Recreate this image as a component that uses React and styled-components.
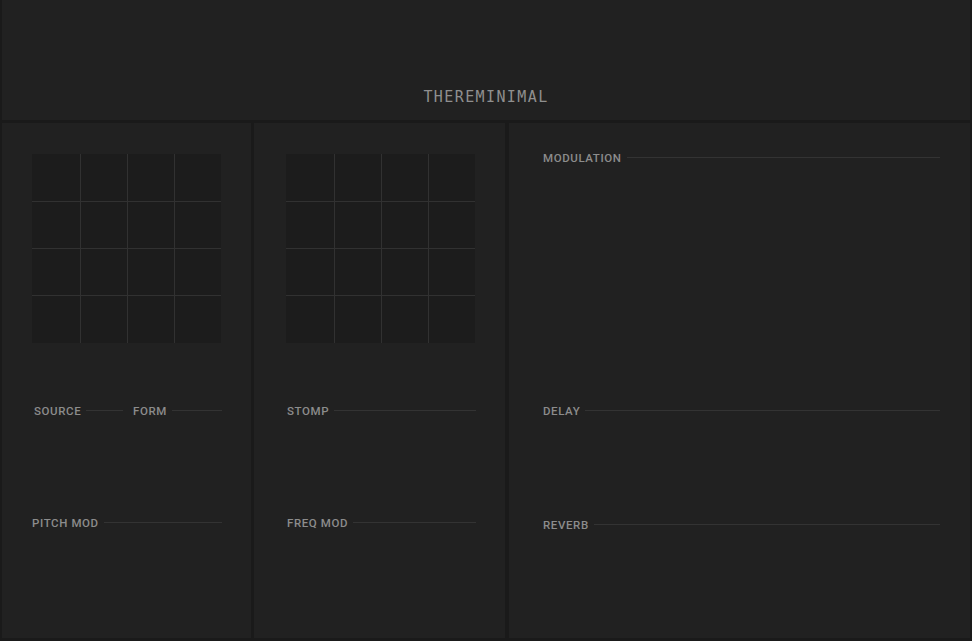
import React from "react";
import styled, { createGlobalStyle } from "styled-components";

const GlobalStyle = createGlobalStyle`
  html, body {
    margin: 0;
    padding: 0;
    background: #1a1a1a;
  }
  body {
    font-family: Roboto, "Liberation Sans", sans-serif;
  }
`;

export default function App() {
  return (
    <>
      <GlobalStyle />
      <Page>
        <Header>
          <Title>THEREMINIMAL</Title>
        </Header>
        <Columns>
          <Panel>
            <Pad />
            <Row>
              <Section $height={112} $inset={2}>
                <Label text="SOURCE" />
              </Section>
              <Section $height={112}>
                <Label text="FORM" />
              </Section>
            </Row>
            <Section>
              <Label text="PITCH MOD" />
            </Section>
          </Panel>
          <Panel $left={32}>
            <Pad />
            <Section $height={112} $inset={1}>
              <Label text="STOMP" />
            </Section>
            <Section $inset={1}>
              <Label text="FREQ MOD" />
            </Section>
          </Panel>
          <WidePanel>
            <Section $height={253}>
              <Label text="MODULATION" />
            </Section>
            <Section $height={114}>
              <Label text="DELAY" />
            </Section>
            <Section>
              <Label text="REVERB" />
            </Section>
          </WidePanel>
        </Columns>
      </Page>
    </>
  );
}

function Label({ text }) {
  return (
    <LabelRow>
      <LabelText>{text}</LabelText>
      <Rule />
    </LabelRow>
  );
}

function Pad() {
  return (
    <PadGrid>
      {Array.from({ length: 16 }).map((_, i) => (
        <Cell key={i} />
      ))}
    </PadGrid>
  );
}

const Page = styled.div`
  display: flex;
  flex-direction: column;
  gap: 3px;
  padding: 0 2px 3px 2px;
  height: 641px;
  box-sizing: border-box;
`;

const Header = styled.header`
  height: 120px;
  background: #212121;
  display: flex;
  align-items: flex-end;
  justify-content: center;
  padding-bottom: 14px;
  box-sizing: border-box;
`;

const Title = styled.h1`
  margin: 0;
  font-family: "DejaVu Sans Mono", "Liberation Mono", monospace;
  font-weight: 400;
  font-size: 15px;
  letter-spacing: 1.4px;
  color: #8f8f8f;
  transform: scaleY(1.05);
`;

const Columns = styled.div`
  flex: 1;
  display: grid;
  grid-template-columns: 249px 251px 1fr;
  column-gap: 3px;
  & > :nth-child(3) {
    margin-left: 1px;
  }
`;

const Panel = styled.section`
  background: #212121;
  padding: 31px 29px 0 ${(p) => p.$left || 30}px;
  display: flex;
  flex-direction: column;
`;

const WidePanel = styled(Panel)`
  padding: 28px 30px 0 34px;
`;

const PadGrid = styled.div`
  width: 189px;
  height: 189px;
  display: grid;
  grid-template-columns: 48px 46px 46px 1fr;
  grid-template-rows: 47px 46px 46px 1fr;
  gap: 1px;
  background: #313131;
  margin-bottom: 61px;
`;

const Cell = styled.div`
  background: #1c1c1c;
`;

const Row = styled.div`
  display: flex;
  gap: 10px;
  & > * {
    flex: 1;
  }
`;

const Section = styled.div`
  height: ${(p) => (p.$height ? `${p.$height}px` : "auto")};
  padding-left: ${(p) => p.$inset || 0}px;
`;

const LabelRow = styled.div`
  display: flex;
  align-items: center;
  gap: 5px;
  height: 13px;
`;

const LabelText = styled.span`
  font-family: Roboto, "Liberation Sans", sans-serif;
  font-size: 11.5px;
  font-weight: 500;
  letter-spacing: 0.6px;
  color: #8c8c8c;
  white-space: nowrap;
`;

const Rule = styled.div`
  flex: 1;
  height: 1px;
  background: #333333;
`;
